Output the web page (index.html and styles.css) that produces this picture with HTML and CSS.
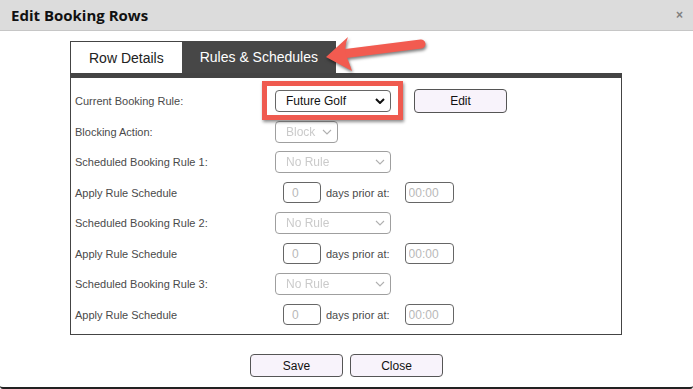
FILE: index.html
```html
<!DOCTYPE html>
<html lang="en">
<head>
  <meta charset="UTF-8" />
  <meta name="viewport" content="width=device-width, initial-scale=1.0" />
  <title>Edit Booking Rows</title>
  <link rel="stylesheet" href="styles.css">
</head>
<body>
  <div class="dialog">
    <div class="dialog-title">
      <span>Edit Booking Rows</span>
      <span class="close-x">&times;</span>
    </div>

    <div class="dialog-body">
      <div class="tabs">
        <div class="tab">Row Details</div>
        <div class="tab active">Rules &amp; Schedules</div>
      </div>

      <div class="panel">
        <div class="row">
          <label>Current Booking Rule:</label>
          <div class="controls">
            <span class="select-wrap wide">
              <select><option>Future Golf</option></select>
              <svg class="chev dark" viewBox="0 0 10 6"><path d="M1 1 L5 5 L9 1" /></svg>
            </span>
            <button class="btn edit-btn">Edit</button>
          </div>
        </div>

        <div class="row">
          <label>Blocking Action:</label>
          <div class="controls">
            <span class="select-wrap small">
              <select disabled><option>Block</option></select>
              <svg class="chev" viewBox="0 0 10 6"><path d="M1 1 L5 5 L9 1" /></svg>
            </span>
          </div>
        </div>

        <div class="row">
          <label>Scheduled Booking Rule 1:</label>
          <div class="controls">
            <span class="select-wrap wide">
              <select disabled><option>No Rule</option></select>
              <svg class="chev" viewBox="0 0 10 6"><path d="M1 1 L5 5 L9 1" /></svg>
            </span>
          </div>
        </div>
        <div class="row">
          <label>Apply Rule Schedule</label>
          <div class="controls schedule">
            <input class="days" type="text" value="0" disabled />
            <span class="note">days prior at:</span>
            <input class="time" type="text" value="00:00" disabled />
          </div>
        </div>

        <div class="row">
          <label>Scheduled Booking Rule 2:</label>
          <div class="controls">
            <span class="select-wrap wide">
              <select disabled><option>No Rule</option></select>
              <svg class="chev" viewBox="0 0 10 6"><path d="M1 1 L5 5 L9 1" /></svg>
            </span>
          </div>
        </div>
        <div class="row">
          <label>Apply Rule Schedule</label>
          <div class="controls schedule">
            <input class="days" type="text" value="0" disabled />
            <span class="note">days prior at:</span>
            <input class="time" type="text" value="00:00" disabled />
          </div>
        </div>

        <div class="row">
          <label>Scheduled Booking Rule 3:</label>
          <div class="controls">
            <span class="select-wrap wide">
              <select disabled><option>No Rule</option></select>
              <svg class="chev" viewBox="0 0 10 6"><path d="M1 1 L5 5 L9 1" /></svg>
            </span>
          </div>
        </div>
        <div class="row">
          <label>Apply Rule Schedule</label>
          <div class="controls schedule">
            <input class="days" type="text" value="0" disabled />
            <span class="note">days prior at:</span>
            <input class="time" type="text" value="00:00" disabled />
          </div>
        </div>
      </div>

      <div class="actions">
        <button class="btn">Save</button>
        <button class="btn">Close</button>
      </div>
    </div>

    <!-- annotation overlays -->
    <div class="highlight"></div>
    <svg class="arrow" width="693" height="100" viewBox="0 0 693 100">
      <line x1="342" y1="54" x2="421" y2="44" />
      <path d="M326 57 L348 37 Q344 47 346 55 Q349 62 352 71 Z" />
    </svg>
  </div>
</body>
</html>
```

FILE: styles.css
```css
body {
  margin: 0;
  background: #fff;
  font-family: "Liberation Sans", Arial, sans-serif;
  color: #222;
}
.dialog {
  position: relative;
  height: 387px;
  border-bottom: 2px solid #222;
  border-radius: 0 0 3px 3px;
  overflow: hidden;
}
.dialog-title {
  height: 30px;
  background: #dcdcdc;
  border-bottom: 1px solid #c6c6c6;
  display: flex;
  align-items: center;
  justify-content: space-between;
  padding: 0 10px 0 11px;
  font-family: "Open Sans", sans-serif;
  font-weight: bold;
  font-size: 15px;
  color: #111;
}
.close-x {
  font-family: "Liberation Sans", sans-serif;
  font-size: 12px;
  color: #808080;
}
.dialog-body {
  padding-top: 10px;
}
.tabs {
  display: flex;
  margin-left: 70px;
}
.tab {
  height: 32px;
  box-sizing: border-box;
  padding: 0 18px;
  display: flex;
  align-items: center;
  font-size: 14px;
  color: #222;
  background: #fff;
  border-left: 1px solid #444;
  border-top: 1px solid #444;
}
.tab.active {
  background: #474747;
  color: #fff;
  border: none;
}
.panel {
  margin-left: 70px;
  width: 552px;
  box-sizing: border-box;
  border: 1px solid #444;
  border-top: 5px solid #444;
  padding: 8px 0 4px 4px;
}
.row {
  display: grid;
  grid-template-columns: 200px 1fr;
  align-items: center;
  height: 30.5px;
}
.row label {
  font-size: 11px;
  color: #4a4a4a;
}
.controls {
  display: flex;
  align-items: center;
}
.select-wrap {
  position: relative;
  display: inline-block;
}
.select-wrap select {
  appearance: none;
  -webkit-appearance: none;
  height: 22px;
  box-sizing: border-box;
  border: 1px solid #666;
  border-radius: 4px;
  background: #fff;
  padding: 0 0 0 10px;
  font-family: "Liberation Sans", Arial, sans-serif;
  font-size: 12px;
  color: #111;
}
.select-wrap select:disabled {
  color: #b5b5b5;
  border-color: #777;
}
.select-wrap.wide select {
  width: 116px;
}
.select-wrap.small select {
  width: 63px;
}
.chev {
  position: absolute;
  right: 6px;
  top: 8px;
  width: 10px;
  height: 6px;
  pointer-events: none;
  fill: none;
  stroke: #b0b0b0;
  stroke-width: 1.1;
}
.chev.dark {
  stroke: #111;
  stroke-width: 2;
}
.btn {
  width: 93px;
  height: 23px;
  background: #f8f3fb;
  border: 1px solid #555;
  border-radius: 4px;
  font-family: "Liberation Sans", Arial, sans-serif;
  font-size: 12px;
  color: #111;
  padding: 0;
}
.edit-btn {
  height: 24px;
  margin-left: 23px;
}
.schedule {
  padding-left: 8px;
}
.schedule input {
  height: 21px;
  box-sizing: border-box;
  border: 1px solid #666;
  border-radius: 4px;
  background: #fff;
  font-family: "Liberation Sans", Arial, sans-serif;
  font-size: 12px;
  color: #b8b8b8;
}
.days {
  width: 38px;
  padding: 0 0 0 8px;
}
.time {
  width: 49px;
  padding: 0 0 0 3px;
}
.note {
  font-size: 11px;
  color: #4a4a4a;
  margin: 0 15px 0 5px;
}
.actions {
  display: flex;
  justify-content: center;
  gap: 7px;
  margin-top: 19px;
}
.highlight {
  position: absolute;
  left: 262px;
  top: 81px;
  width: 141px;
  height: 39px;
  box-sizing: border-box;
  border: 5px solid #ef5a4f;
  box-shadow: 1px 2px 3px rgba(0, 0, 0, 0.45);
}
.arrow {
  position: absolute;
  left: 0;
  top: 0;
  filter: drop-shadow(1px 2px 1.5px rgba(0, 0, 0, 0.5));
}
.arrow line {
  stroke: #f25b50;
  stroke-width: 9;
  stroke-linecap: round;
}
.arrow path {
  fill: #f25b50;
}
```
